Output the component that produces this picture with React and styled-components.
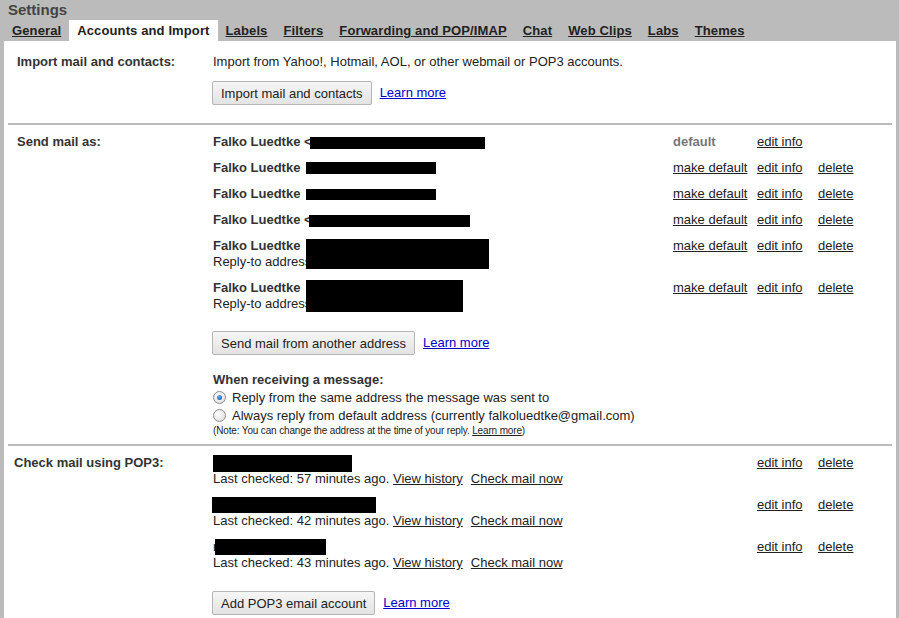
import React from 'react';
import styled, { createGlobalStyle } from 'styled-components';

const GlobalStyle = createGlobalStyle`
  html, body {
    margin: 0;
    padding: 0;
    background: #bbbbbb;
  }
  body {
    font-family: "Liberation Sans", Arial, sans-serif;
    font-size: 13px;
    color: #222;
  }
`;

const tabs = ['General', 'Accounts and Import', 'Labels', 'Filters', 'Forwarding and POP/IMAP', 'Chat', 'Web Clips', 'Labs', 'Themes'];

const sendAs = [
    { box: { l: 97, t: 3, w: 175, h: 12 }, extra: '<', isDefault: true },
    { box: { l: 93, t: 2, w: 130, h: 12 } },
    { box: { l: 93, t: 3, w: 130, h: 11 } },
    { box: { l: 96, t: 3, w: 161, h: 12 }, extra: '<' },
    { box: { l: 93, t: 1, w: 183, h: 30 }, reply: true },
    { box: { l: 93, t: 0, w: 157, h: 32 }, reply: true },
];

const pop3 = [
    { box: { l: 0, t: 0, w: 139, h: 17 }, minutes: 57 },
    { box: { l: -1, t: 0, w: 164, h: 16 }, minutes: 42 },
    { box: { l: 2, t: 0, w: 111, h: 16 }, minutes: 43, first: 'r' },
];

const App = () => {
    return (
        <Page>
            <GlobalStyle />
            <Title>Settings</Title>
            <TabBar>
                {tabs.map((t) => (
                    <Tab key={t} $active={t === 'Accounts and Import'}>{t}</Tab>
                ))}
            </TabBar>
            <Panel>
                <Section $first $pb={18}>
                    <Label>Import mail and contacts:</Label>
                    <Content>
                        <Line>Import from Yahoo!, Hotmail, AOL, or other webmail or POP3 accounts.</Line>
                        <ButtonRow $mt={11}>
                            <Button>Import mail and contacts</Button>
                            <LearnMore>Learn more</LearnMore>
                        </ButtonRow>
                    </Content>
                </Section>

                <Section $pb={7}>
                    <Label>Send mail as:</Label>
                    <Content>
                        {sendAs.map((a, i) => (
                            <ActionRow key={i}>
                                <NameCell>
                                    <Name>Falko Luedtke {a.extra}</Name>
                                    {a.reply && <Line>Reply-to address:</Line>}
                                    <Redact $l={a.box.l} $t={a.box.t} $w={a.box.w} $h={a.box.h} />
                                </NameCell>
                                {a.isDefault ? <DefaultTag>default</DefaultTag> : <Action>make default</Action>}
                                <Action>edit info</Action>
                                {!a.isDefault && <Action>delete</Action>}
                            </ActionRow>
                        ))}
                        <ButtonRow $mt={9}>
                            <Button>Send mail from another address</Button>
                            <LearnMore>Learn more</LearnMore>
                        </ButtonRow>
                        <SubHeading>When receiving a message:</SubHeading>
                        <RadioRow>
                            <Radio $checked />
                            <span>Reply from the same address the message was sent to</span>
                        </RadioRow>
                        <RadioRow>
                            <Radio />
                            <span>Always reply from default address (currently falkoluedtke@gmail.com)</span>
                        </RadioRow>
                        <Note>
                            (Note: You can change the address at the time of your reply. <NoteLink>Learn more</NoteLink>)
                        </Note>
                    </Content>
                </Section>

                <Section $pb={20}>
                    <Label $pl={6}>Check mail using POP3:</Label>
                    <Content>
                        {pop3.map((p, i) => (
                            <ActionRow key={i}>
                                <NameCell>
                                    <Line>{p.first || '\u00a0'}</Line>
                                    <Line>
                                        Last checked: {p.minutes} minutes ago. <Action>View history</Action>
                                        <Action $ml={8}>Check mail now</Action>
                                    </Line>
                                    <Redact $l={p.box.l} $t={p.box.t} $w={p.box.w} $h={p.box.h} />
                                </NameCell>
                                <span />
                                <Action>edit info</Action>
                                <Action>delete</Action>
                            </ActionRow>
                        ))}
                        <ButtonRow $mt={10}>
                            <Button>Add POP3 email account</Button>
                            <LearnMore>Learn more</LearnMore>
                        </ButtonRow>
                    </Content>
                </Section>
            </Panel>
        </Page>
    );
};

export default App;

const Page = styled.div`
    display: flex;
    flex-direction: column;
    min-height: 100vh;
    padding: 0 3px 0 4px;
    box-sizing: border-box;
`;

const Title = styled.div`
    font-size: 15px;
    font-weight: bold;
    color: #444;
    line-height: 20px;
    height: 20px;
    padding-left: 4px;
`;

const TabBar = styled.div`
    display: flex;
    height: 21px;
`;

const Tab = styled.div`
    padding: 1px 8px 0;
    line-height: 20px;
    font-weight: bold;
    letter-spacing: 0.12px;
    color: #222;
    text-decoration: ${(p) => (p.$active ? 'none' : 'underline')};
    background: ${(p) => (p.$active ? '#fff' : 'transparent')};
    cursor: pointer;
`;

const Panel = styled.div`
    flex: 1;
    background: #fff;
    padding: 4px 4px 0;
`;

const Section = styled.div`
    display: grid;
    grid-template-columns: 205px 1fr;
    padding: 9px 0 ${(p) => p.$pb}px;
    border-top: ${(p) => (p.$first ? 'none' : '2px solid #bbb')};
`;

const Label = styled.div`
    padding-left: ${(p) => p.$pl ?? 9}px;
    font-weight: bold;
    color: #333;
    line-height: 16px;
`;

const Content = styled.div`
    display: flex;
    flex-direction: column;
`;

const Line = styled.div`
    line-height: 16px;
    white-space: nowrap;
`;

const ButtonRow = styled.div`
    display: flex;
    align-items: flex-start;
    gap: 8px;
    margin-top: ${(p) => p.$mt}px;
    margin-left: -1px;
`;

const Button = styled.button`
    font-family: "Liberation Sans", Arial, sans-serif;
    font-size: 13px;
    color: #222;
    height: 24px;
    padding: 0 8px;
    border: 1px solid #b5b5b5;
    border-radius: 2px;
    background: linear-gradient(#f6f6f6, #e3e3e3);
    cursor: pointer;
`;

const LearnMore = styled.a`
    color: #0000cc;
    text-decoration: underline;
    margin-top: 4px;
    line-height: 16px;
    cursor: pointer;
`;

const ActionRow = styled.div`
    display: grid;
    grid-template-columns: 460px 84px 61px 1fr;
    margin-bottom: 10px;
    line-height: 16px;
    align-items: start;
`;

const NameCell = styled.div`
    position: relative;
    display: flex;
    flex-direction: column;
`;

const Name = styled.div`
    font-weight: bold;
    color: #333;
    line-height: 16px;
    white-space: nowrap;
`;

const Redact = styled.span`
    position: absolute;
    left: ${(p) => p.$l}px;
    top: ${(p) => p.$t}px;
    width: ${(p) => p.$w}px;
    height: ${(p) => p.$h}px;
    background: #000;
`;

const Action = styled.a`
    color: #222;
    text-decoration: underline;
    white-space: nowrap;
    cursor: pointer;
    justify-self: start;
    margin-left: ${(p) => p.$ml ?? 0}px;
`;

const DefaultTag = styled.span`
    font-weight: bold;
    color: #777;
`;

const SubHeading = styled.div`
    margin-top: 17px;
    font-weight: bold;
    color: #333;
    line-height: 16px;
`;

const RadioRow = styled.label`
    display: flex;
    align-items: center;
    gap: 6px;
    height: 18px;
    white-space: nowrap;
`;

const Radio = styled.span`
    position: relative;
    width: 11px;
    height: 11px;
    border-radius: 50%;
    border: 1px solid #8c8c8c;
    background: radial-gradient(circle at 40% 35%, #ffffff, #d8d8d8);
    flex-shrink: 0;
    &::after {
        content: '';
        display: ${(p) => (p.$checked ? 'block' : 'none')};
        position: absolute;
        left: 3px;
        top: 3px;
        width: 5px;
        height: 5px;
        border-radius: 50%;
        background: radial-gradient(circle at 40% 35%, #5fb0f0, #0a4f9c);
    }
`;

const Note = styled.div`
    font-size: 10px;
    line-height: 13px;
    white-space: nowrap;
    letter-spacing: -0.15px;
`;

const NoteLink = styled.a`
    color: #222;
    text-decoration: underline;
`;
